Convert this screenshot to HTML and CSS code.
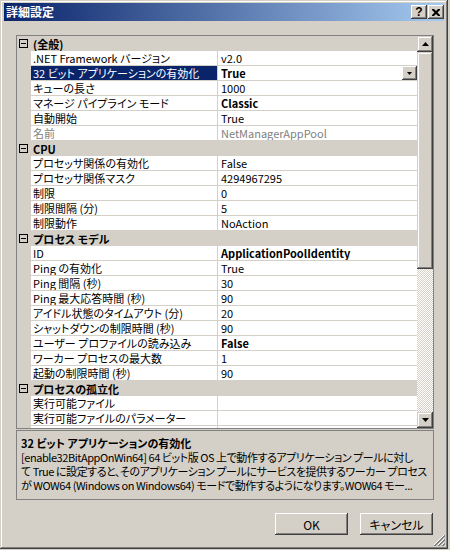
FILE: index.html
```html
<!DOCTYPE html>
<html lang="ja">
<head>
  <meta charset="UTF-8" />
  <title>詳細設定</title>
  <link rel="stylesheet" href="styles.css">
</head>
<body>
  <div class="window">
    <div class="titlebar">
      <span class="title">詳細設定</span>
      <span class="cap-btn help">?</span>
      <span class="cap-btn">
        <svg width="8" height="7" viewBox="0 0 8 7"><path d="M0 0h2l2 2 2-2h2v1l-2.5 2.5L8 6v1H6L4 5 2 7H0V6l2.5-2.5L0 1z" fill="#000"/></svg>
      </span>
    </div>

    <div class="content">
      <div class="grid">
        <div class="rows">
          <div class="cat"><span class="toggle"></span>(全般)</div>
          <div class="prop"><div class="name">.NET Framework バージョン</div><div class="value">v2.0</div></div>
          <div class="prop"><div class="name sel">32 ビット アプリケーションの有効化</div><div class="value"><b>True</b><span class="drop"><svg width="5" height="3" viewBox="0 0 5 3"><path d="M0 0h5L2.5 3z" fill="#000"/></svg></span></div></div>
          <div class="prop"><div class="name">キューの長さ</div><div class="value">1000</div></div>
          <div class="prop"><div class="name">マネージ パイプライン モード</div><div class="value"><b>Classic</b></div></div>
          <div class="prop"><div class="name">自動開始</div><div class="value">True</div></div>
          <div class="prop readonly"><div class="name">名前</div><div class="value">NetManagerAppPool</div></div>

          <div class="cat"><span class="toggle"></span>CPU</div>
          <div class="prop"><div class="name">プロセッサ関係の有効化</div><div class="value">False</div></div>
          <div class="prop"><div class="name">プロセッサ関係マスク</div><div class="value">4294967295</div></div>
          <div class="prop"><div class="name">制限</div><div class="value">0</div></div>
          <div class="prop"><div class="name">制限間隔 (分)</div><div class="value">5</div></div>
          <div class="prop"><div class="name">制限動作</div><div class="value">NoAction</div></div>

          <div class="cat"><span class="toggle"></span>プロセス モデル</div>
          <div class="prop"><div class="name">ID</div><div class="value"><b>ApplicationPoolIdentity</b></div></div>
          <div class="prop"><div class="name">Ping の有効化</div><div class="value">True</div></div>
          <div class="prop"><div class="name">Ping 間隔 (秒)</div><div class="value">30</div></div>
          <div class="prop"><div class="name">Ping 最大応答時間 (秒)</div><div class="value">90</div></div>
          <div class="prop"><div class="name">アイドル状態のタイムアウト (分)</div><div class="value">20</div></div>
          <div class="prop"><div class="name">シャットダウンの制限時間 (秒)</div><div class="value">90</div></div>
          <div class="prop"><div class="name">ユーザー プロファイルの読み込み</div><div class="value"><b>False</b></div></div>
          <div class="prop"><div class="name">ワーカー プロセスの最大数</div><div class="value">1</div></div>
          <div class="prop"><div class="name">起動の制限時間 (秒)</div><div class="value">90</div></div>

          <div class="cat"><span class="toggle"></span>プロセスの孤立化</div>
          <div class="prop"><div class="name">実行可能ファイル</div><div class="value"></div></div>
          <div class="prop"><div class="name">実行可能ファイルのパラメーター</div><div class="value"></div></div>
          <div class="prop"><div class="name">有効</div><div class="value">False</div></div>
        </div>

        <div class="scrollbar">
          <div class="sb-btn"><svg width="7" height="4" viewBox="0 0 7 4"><path d="M3.5 0L7 4H0z" fill="#000"/></svg></div>
          <div class="sb-thumb"></div>
          <div class="sb-track"></div>
          <div class="sb-btn"><svg width="7" height="4" viewBox="0 0 7 4"><path d="M0 0h7L3.5 4z" fill="#000"/></svg></div>
        </div>
      </div>

      <div class="desc">
        <div class="desc-title">32 ビット アプリケーションの有効化</div>
        <div class="desc-line">[enable32BitAppOnWin64] 64 ビット版 OS 上で動作するアプリケーション プールに対し</div>
        <div class="desc-line">て True に設定すると、そのアプリケーション プールにサービスを提供するワーカー プロセス</div>
        <div class="desc-line">が WOW64 (Windows on Windows64) モードで動作するようになります。WOW64 モー...</div>
      </div>

      <div class="actions">
        <button>OK</button>
        <button>キャンセル</button>
      </div>
    </div>

    <svg class="grip" width="12" height="12" viewBox="0 0 12 12">
      <path d="M11 1L1 11M11 5L5 11M11 9L9 11" stroke="#fff" stroke-width="1"/>
      <path d="M12 1L1 12M12 2L2 12M12 5L5 12M12 6L6 12M12 9L9 12M12 10L10 12" stroke="#808080" stroke-width="1"/>
    </svg>
  </div>
</body>
</html>
```

FILE: styles.css
```css
body {
  margin: 0;
  background: #d4d0c8;
  font-family: "Noto Sans CJK JP", sans-serif;
  font-size: 11px;
  font-feature-settings: "palt";
  color: #000;
}
.window {
  position: relative;
  width: 448px;
  height: 549px;
  box-sizing: border-box;
  padding: 3px 4px;
  background: #d4d0c8;
  box-shadow: inset -1px -1px #404040, inset 1px 1px #d4d0c8, inset -2px -2px #808080, inset 2px 2px #fff;
}
.titlebar {
  height: 18px;
  display: flex;
  align-items: center;
  background: linear-gradient(to right, #0a246a, #a6caf0);
}
.title {
  flex: 1;
  padding-left: 2px;
  color: #fff;
  font-weight: bold;
  font-size: 12px;
  line-height: 18px;
}
.cap-btn {
  width: 16px;
  height: 14px;
  box-sizing: border-box;
  display: flex;
  align-items: center;
  justify-content: center;
  background: #d4d0c8;
  box-shadow: inset -1px -1px #404040, inset 1px 1px #fff, inset -2px -2px #808080;
  font-family: "Liberation Sans", sans-serif;
  font-weight: bold;
  font-size: 12px;
  line-height: 14px;
}
.cap-btn.help {
  margin-right: 1px;
}
.content {
  padding: 14px 10px 0 12px;
}
.grid {
  display: flex;
  height: 394px;
  box-sizing: border-box;
  border: 1px solid #808080;
  background: #d4d0c8;
}
.rows {
  flex: 1;
  overflow: hidden;
}
.cat {
  height: 15px;
  display: flex;
  align-items: center;
  font-weight: bold;
  line-height: 14px;
  white-space: nowrap;
}
.toggle {
  position: relative;
  width: 9px;
  height: 9px;
  box-sizing: border-box;
  margin: 0 5px 0 2px;
  border: 1px solid #000;
}
.toggle::after {
  content: "";
  position: absolute;
  left: 1px;
  top: 3px;
  width: 5px;
  height: 1px;
  background: #000;
}
.prop {
  display: flex;
  height: 14px;
  margin-bottom: 1px;
  line-height: 14px;
  white-space: nowrap;
}
.name {
  width: 186px;
  margin-left: 14px;
  padding-left: 2px;
  box-sizing: border-box;
  overflow: hidden;
  background: #fff;
}
.name.sel {
  background: #0a246a;
  color: #fff;
}
.value {
  flex: 1;
  display: flex;
  margin-left: 1px;
  padding-left: 3px;
  overflow: hidden;
  background: #fff;
}
.value b {
  flex: 1;
}
.readonly {
  color: #808080;
}
.drop {
  width: 15px;
  height: 14px;
  box-sizing: border-box;
  display: flex;
  align-items: center;
  justify-content: center;
  background: #d4d0c8;
  box-shadow: inset -1px -1px #404040, inset 1px 1px #fff, inset -2px -2px #808080;
}
.scrollbar {
  width: 16px;
  display: flex;
  flex-direction: column;
}
.sb-btn, .sb-thumb {
  background: #d4d0c8;
  box-shadow: inset -1px -1px #404040, inset 1px 1px #d4d0c8, inset -2px -2px #808080, inset 2px 2px #fff;
}
.sb-btn {
  height: 16px;
  display: flex;
  align-items: center;
  justify-content: center;
}
.sb-thumb {
  height: 217px;
}
.sb-track {
  flex: 1;
  background: repeating-conic-gradient(#d4d0c8 0 25%, #fff 0 50%) 0 0 / 2px 2px;
}
.desc {
  height: 70px;
  box-sizing: border-box;
  margin-top: 1px;
  padding: 5px 4px 0;
  border: 1px solid #808080;
  line-height: 14px;
  white-space: nowrap;
  overflow: hidden;
}
.desc-title {
  font-weight: bold;
}
.desc-line {
  letter-spacing: -0.45px;
}
.actions {
  display: flex;
  justify-content: flex-end;
  gap: 12px;
  margin-top: 13px;
  padding-right: 1px;
}
button {
  width: 73px;
  height: 22px;
  padding: 0;
  border: none;
  background: #d4d0c8;
  font: inherit;
  font-size: 12px;
  box-shadow: inset -1px -1px #404040, inset 1px 1px #fff, inset -2px -2px #808080, inset 2px 2px #d4d0c8;
}
.grip {
  position: absolute;
  right: 3px;
  bottom: 3px;
}
```
